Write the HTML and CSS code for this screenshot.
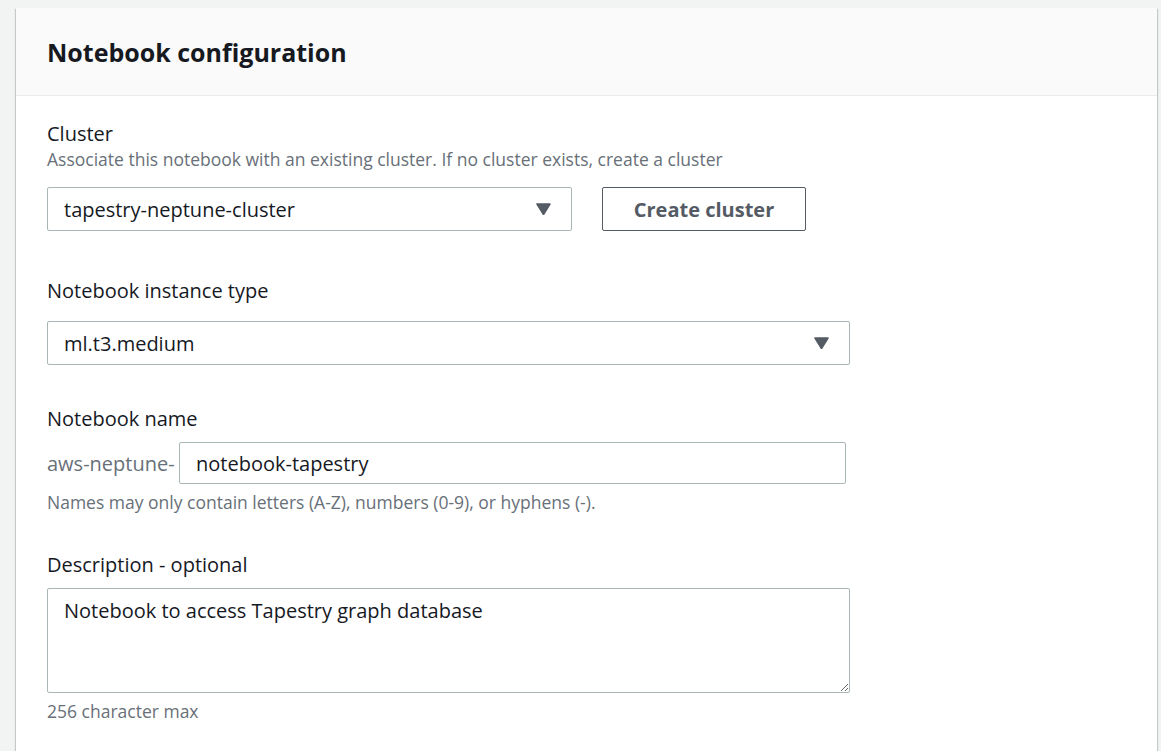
FILE: index.html
```html
<!DOCTYPE html>
<html lang="en">
<head>
<meta charset="utf-8">
<title>Notebook configuration</title>
<link rel="stylesheet" href="styles.css">
</head>
<body>
<div class="card">
  <div class="card-header">
    <h2 class="card-title">Notebook configuration</h2>
  </div>
  <div class="card-body">
    <div class="field field-first">
      <div class="label">Cluster</div>
      <div class="description">Associate this notebook with an existing cluster. If no cluster exists, create a cluster</div>
      <div class="control-row control-gap-small">
        <div class="select select-cluster">
          <span class="select-value">tapestry-neptune-cluster</span>
          <svg class="caret" width="15" height="12" viewBox="0 0 15 12"><polygon points="1,1 14,1 7.5,11.5" fill="#545b64" stroke="#545b64" stroke-width="1.5" stroke-linejoin="round"/></svg>
        </div>
        <button class="btn" type="button">Create cluster</button>
      </div>
    </div>

    <div class="field field-second">
      <div class="label">Notebook instance type</div>
      <div class="control-row control-gap-medium">
        <div class="select select-wide">
          <span class="select-value">ml.t3.medium</span>
          <svg class="caret" width="15" height="12" viewBox="0 0 15 12"><polygon points="1,1 14,1 7.5,11.5" fill="#545b64" stroke="#545b64" stroke-width="1.5" stroke-linejoin="round"/></svg>
        </div>
      </div>
    </div>

    <div class="field field-third">
      <div class="label">Notebook name</div>
      <div class="control-row control-gap-tight name-row">
        <span class="prefix">aws-neptune-</span>
        <div class="input name-input">notebook-tapestry</div>
      </div>
      <div class="hint">Names may only contain letters (A-Z), numbers (0-9), or hyphens (-).</div>
    </div>

    <div class="field field-fourth">
      <div class="label">Description - optional</div>
      <div class="control-row control-gap-tight">
        <textarea class="textarea" rows="3">Notebook to access Tapestry graph database</textarea>
      </div>
      <div class="hint">256 character max</div>
    </div>
  </div>
</div>
</body>
</html>
```

FILE: styles.css
```css
html, body {
  margin: 0;
  height: 751px;
  overflow: hidden;
}

body {
  background: #f2f3f3;
  padding: 8px 4px 0 16px;
  box-sizing: border-box;
  font-family: "Open Sans", "Noto Sans", sans-serif;
  color: #16191f;
}

.card {
  background: #ffffff;
  min-height: 900px;
  box-shadow: 0 1px 1px 0 rgba(0, 28, 36, 0.3),
              1px 1px 1px 0 rgba(0, 28, 36, 0.15),
              -1px 1px 1px 0 rgba(0, 28, 36, 0.15);
}

.card-header {
  height: 88px;
  box-sizing: border-box;
  background: #fafafa;
  border-bottom: 1px solid #eaeded;
  padding: 0 31px;
  display: flex;
  align-items: center;
}

.card-title {
  margin: 0;
  font-size: 25px;
  font-weight: 700;
  line-height: 34px;
  color: #16191f;
}

.card-body {
  padding: 24px 31px 0 31px;
}

.field-second {
  margin-top: 46px;
}

.field-third {
  margin-top: 40px;
}

.field-fourth {
  margin-top: 38px;
}

.label {
  font-size: 20px;
  line-height: 28px;
  color: #16191f;
}

.description {
  font-size: 17.5px;
  line-height: 22px;
  color: #687078;
}

.control-row {
  display: flex;
  align-items: center;
}

.control-gap-small {
  margin-top: 17px;
}

.control-gap-medium {
  margin-top: 16px;
}

.control-gap-tight {
  margin-top: 9px;
}

.select {
  height: 44px;
  box-sizing: border-box;
  border: 1px solid #aab7b8;
  border-radius: 2px;
  background: #ffffff;
  padding: 0 20px 0 16px;
  display: flex;
  align-items: center;
  justify-content: space-between;
}

.select-cluster {
  width: 525px;
}

.select-wide {
  width: 803px;
}

.select-value {
  font-size: 20px;
  color: #16191f;
}

.caret {
  display: block;
  flex: none;
}

.btn {
  margin-left: 30px;
  width: 204px;
  height: 44px;
  box-sizing: border-box;
  border: 1px solid #545b64;
  border-radius: 2px;
  background: #ffffff;
  font-family: "Open Sans", "Noto Sans", sans-serif;
  font-size: 20px;
  font-weight: 700;
  color: #545b64;
  padding: 0;
}

.prefix {
  font-size: 20px;
  color: #687078;
  width: 132px;
  flex: none;
}

.input {
  height: 42px;
  box-sizing: border-box;
  border: 1px solid #aab7b8;
  border-radius: 2px;
  padding: 0 16px;
  display: flex;
  align-items: center;
  font-size: 20px;
  color: #16191f;
}

.name-input {
  width: 667px;
}

.hint {
  margin-top: 7px;
  font-size: 17.5px;
  line-height: 22px;
  color: #687078;
}

.textarea {
  width: 803px;
  height: 105px;
  box-sizing: border-box;
  border: 1px solid #aab7b8;
  border-radius: 2px;
  padding: 8px 16px;
  font-family: "Open Sans", "Noto Sans", sans-serif;
  font-size: 20px;
  line-height: 28px;
  color: #16191f;
  resize: vertical;
  margin: 0;
  display: block;
}
```
